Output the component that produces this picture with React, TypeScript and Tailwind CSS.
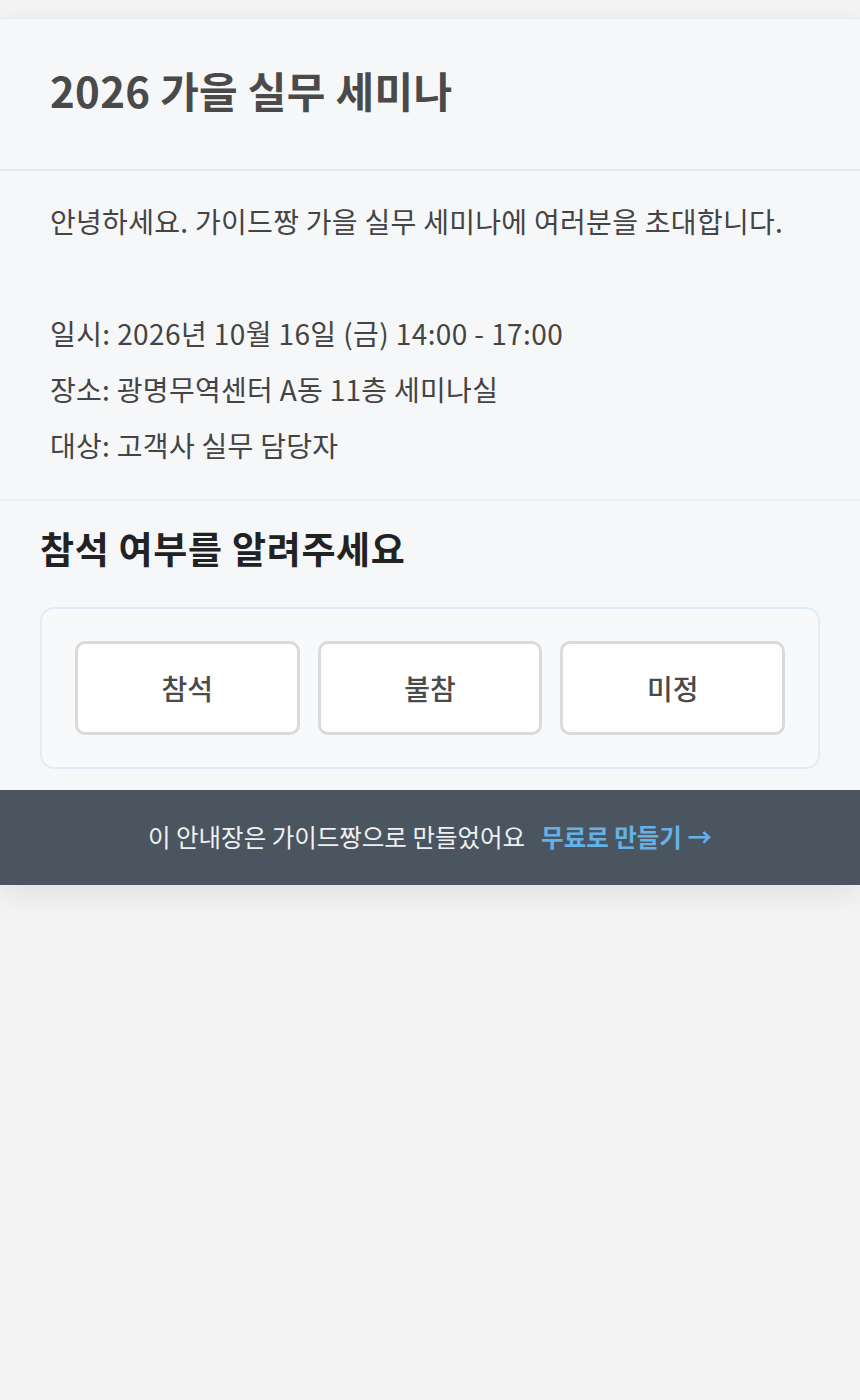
import React from "react";

export default function App() {
  const font = { fontFamily: '"Noto Sans CJK KR", "Noto Sans", sans-serif' };
  return (
    <div className="min-h-[1400px] bg-[#f4f4f5] pt-[18px]" style={font}>
      <div className="bg-[#f6f7f9] border-t border-[#e6e8eb] shadow-[0_8px_30px_rgba(0,0,0,0.09)]">
        <div className="h-[152px] px-[50px] pb-[8px] flex items-center border-b-2 border-[#e6e8eb]">
          <h1 className="text-[42px] leading-[56px] font-bold text-[#4a4a4a] tracking-[0.3px]">2026 가을 실무 세미나</h1>
        </div>
        <div className="px-[50px] pt-[22px] pb-[26px] text-[28px] leading-[56px] text-[#444] border-b-2 border-[#eceef1] tracking-[0.3px]">
          <p>안녕하세요. 가이드짱 가을 실무 세미나에 여러분을 초대합니다.</p>
          <p>&nbsp;</p>
          <p className="tracking-[0.4px]">일시: 2026년 10월 16일 (금) 14:00 - 17:00</p>
          <p>장소: 광명무역센터 A동 11층 세미나실</p>
          <p>대상: 고객사 실무 담당자</p>
        </div>
        <div className="px-[40px] pt-[23px] pb-[21px]">
          <h2 className="text-[37px] leading-[48px] font-semibold text-[#222] tracking-[0.7px]">참석 여부를 알려주세요</h2>
          <div className="mt-[35px] border-2 border-[#e1ecf6] rounded-[14px] bg-[#f7f9fb] px-[33px] py-[32px] grid grid-cols-3 gap-[18px]">
            {["참석", "불참", "미정"].map((t) => (
              <button
                key={t}
                className="h-[94px] bg-white border-[3px] border-[#dadada] rounded-[10px] text-[28px] font-medium text-[#4a4a4a]"
              >
                {t}
              </button>
            ))}
          </div>
        </div>
        <div className="h-[95px] bg-[#4b5560] flex items-center justify-center gap-[16px] text-[24.5px]">
          <span className="text-[#eef0f2]">이 안내장은 가이드짱으로 만들었어요</span>
          <span className="text-[#64b1ea] font-bold">무료로 만들기 →</span>
        </div>
      </div>
    </div>
  );
}
